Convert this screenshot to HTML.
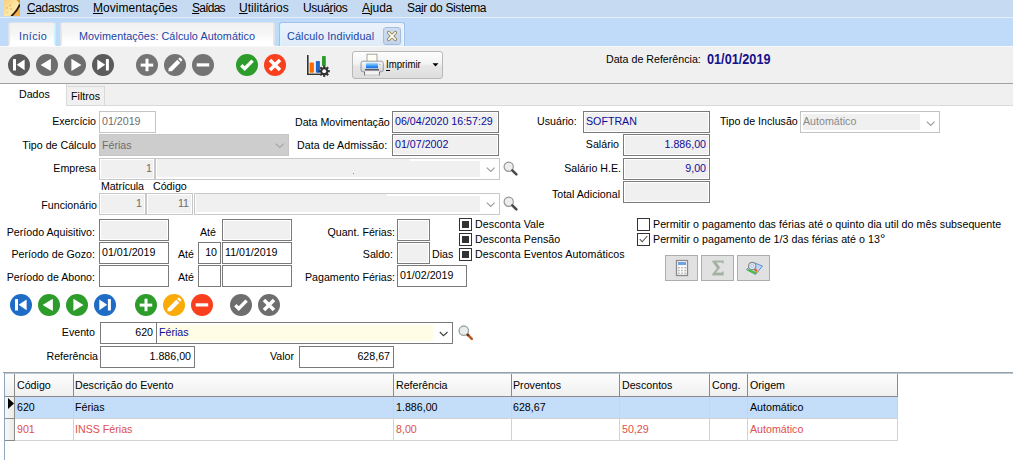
<!DOCTYPE html>
<html><head><meta charset="utf-8">
<style>
*{box-sizing:border-box;margin:0;padding:0}
html,body{width:1013px;height:460px;overflow:hidden;background:#fff;position:relative;font-family:"Liberation Sans",sans-serif}
.a{position:absolute}
.l{position:absolute;font-size:10.67px;line-height:12px;white-space:nowrap;color:#000}
.r{text-align:right}
.m{position:absolute;font-size:12px;line-height:14px;white-space:nowrap;color:#000}
.m u{text-decoration:underline;text-decoration-thickness:1px;text-underline-offset:0.5px}
.bx{position:absolute;border:1px solid #7a7a7a;background:#fff}
.g{background:#f0f0f0}
.nv{color:#1c1ca0}
.gr{color:#6d6d6d}
.circ{position:absolute;width:22px;height:22px;border-radius:50%}
.circ svg{position:absolute;left:0;top:0}
.cb{position:absolute;width:13px;height:13px;border:1px solid #333;background:#fff}
.cb i{position:absolute;left:2px;top:2px;width:7px;height:7px;background:#333}
.cbe{position:absolute;width:13px;height:13px;border:1px solid #333;background:#fff}
.gh{position:absolute;font-size:10.67px;line-height:12px;white-space:nowrap}
</style></head><body>

<!-- MENU BAR -->
<div class="a" style="left:0;top:0;width:1013px;height:17px;background:#c6dbf1"></div>
<div class="a" style="left:0;top:17px;width:1013px;height:1px;background:#e6eef8"></div>
<svg class="a" style="left:4px;top:0" width="16" height="16"><defs><linearGradient id="pg" x1="0" y1="0" x2="1" y2="1"><stop offset="0" stop-color="#f7cf80"/><stop offset="0.55" stop-color="#fde7a4"/><stop offset="1" stop-color="#f9d890"/></linearGradient></defs><rect width="16" height="16" fill="url(#pg)"/><path d="M8.5 16Q13.8 11.5 16 5.5V16Z" fill="#f4b24a"/><path d="M12.5 0H16V5Q15 1.8 12.5 0Z" fill="#d9922e"/><path d="M7.2 16.3Q13.2 11.2 15.9 4.4" stroke="#2c1a06" stroke-width="1.9" fill="none"/><circle cx="6.2" cy="5.3" r="0.9" fill="#eab56a"/><circle cx="2.8" cy="7.8" r="0.9" fill="#eab56a"/><circle cx="7.2" cy="8.8" r="0.9" fill="#eab56a"/><circle cx="3.5" cy="12.5" r="0.8" fill="#f0c27a"/></svg>
<div class="m" style="left:27px;top:1px;letter-spacing:-0.366px"><u>C</u>adastros</div>
<div class="m" style="left:93px;top:1px;letter-spacing:0.044px"><u>M</u>ovimentações</div>
<div class="m" style="left:192px;top:1px;letter-spacing:-0.760px"><u>S</u>aídas</div>
<div class="m" style="left:239px;top:1px;letter-spacing:0.033px"><u>U</u>tilitários</div>
<div class="m" style="left:303px;top:1px;letter-spacing:-0.356px">Usuá<u>r</u>ios</div>
<div class="m" style="left:362px;top:1px;letter-spacing:-0.038px"><u>A</u>juda</div>
<div class="m" style="left:407px;top:1px;letter-spacing:-0.374px">Sa<u>i</u>r do Sistema</div>

<!-- TAB STRIP -->
<div class="a" style="left:0;top:18px;width:1013px;height:28px;background:#c0dbfa"></div>
<div class="a" style="left:8px;top:22px;width:48px;height:25px;background:linear-gradient(#f1f1f1,#f7f7f7 50%,#fff 80%);border:1px solid #dde3ea;border-bottom:none;border-radius:3px 3px 0 0"></div>
<div class="a" style="left:9px;top:25px;width:1px;height:20px;background:#c6f4fc"></div><div class="a" style="left:54px;top:25px;width:1px;height:20px;background:#c6f4fc"></div>
<div class="a" style="left:60px;top:22px;width:215px;height:25px;background:linear-gradient(#f1f1f1,#f7f7f7 50%,#fff 80%);border:1px solid #dde3ea;border-bottom:none;border-radius:3px 3px 0 0"></div>
<div class="a" style="left:61px;top:25px;width:1px;height:20px;background:#c6f4fc"></div><div class="a" style="left:273px;top:25px;width:1px;height:20px;background:#c6f4fc"></div>
<div class="a" style="left:279px;top:22px;width:126px;height:25px;background:linear-gradient(#ebf2fb,#dfebf8);border:1px solid #9fc1ea;border-bottom:none;border-radius:3px 3px 0 0"></div>
<div class="a" style="left:280px;top:25px;width:1px;height:20px;background:#d4f6fd"></div><div class="a" style="left:403px;top:25px;width:1px;height:21px;background:#f4fbff"></div>
<div class="l" style="left:19px;top:30px;font-size:10.8px;color:#2243a6;letter-spacing:0.4px">Início</div>
<div class="l" style="left:79px;top:30px;font-size:10.8px;color:#2243a6;letter-spacing:0.06px">Movimentações: Cálculo Automático</div>
<div class="l" style="left:287px;top:30px;font-size:10.8px;color:#2243a6;letter-spacing:0.15px">Cálculo Individual</div>
<div class="a" style="left:383px;top:27px;width:18px;height:18px;background:linear-gradient(#cddcf0,#c2d4ec);border:1px solid #a6bedc;border-radius:3px"></div>

<!-- TOOLBAR -->
<div class="a" style="left:0;top:46px;width:1013px;height:1px;background:#f9f9f9"></div><div class="a" style="left:0;top:47px;width:1013px;height:36px;background:#f0f0f0"></div>
<div class="a" style="left:0;top:83px;width:1013px;height:1px;background:#a0a0a0"></div>


<!-- toolbar icons -->
<div class="circ" style="left:8px;top:54px;background:#5b5b5b"><svg width="22" height="22"><rect x="5" y="5" width="3" height="11.6" rx="0.5" fill="#fff"/><path d="M8.7 10.8L16.6 5.6V16.2Z" fill="#fff"/></svg></div>
<div class="circ" style="left:36px;top:54px;background:#6e6e6e"><svg width="22" height="22"><path d="M4.6 10.9L14.9 4.8V17.1Z" fill="#fff"/></svg></div>
<div class="circ" style="left:64px;top:54px;background:#6e6e6e"><svg width="22" height="22"><path d="M17.5 10.9L7.4 4.8V17.1Z" fill="#fff"/></svg></div>
<div class="circ" style="left:92px;top:54px;background:#5b5b5b"><svg width="22" height="22"><rect x="13.9" y="5" width="3" height="11.6" rx="0.5" fill="#fff"/><path d="M13.2 10.8L5.3 5.6V16.2Z" fill="#fff"/></svg></div>
<div class="circ" style="left:136px;top:54px;background:#747474"><svg width="22" height="22"><rect x="4.7" y="9.6" width="12.5" height="3" fill="#fff"/><rect x="9.5" y="4.7" width="3" height="12.5" fill="#fff"/></svg></div>
<div class="circ" style="left:164px;top:54px;background:#747474"><svg width="22" height="22"><path d="M4.3 17.3L4.9 14.2L13.3 5.8L16.3 8.8L7.9 17.2Z" fill="#fff"/><path d="M14.2 4.9L15.2 3.9Q15.9 3.3 16.6 4L17.9 5.3Q18.6 6 18 6.7L17.1 7.7Z" fill="#fff"/></svg></div>
<div class="circ" style="left:192px;top:54px;background:#747474"><svg width="22" height="22"><rect x="4.7" y="9.3" width="12.5" height="3.2" fill="#fff"/></svg></div>
<div class="circ" style="left:236px;top:54px;background:#2e9c2a"><svg width="22" height="22"><path d="M5.3 11.3L8.7 14.6L16.6 6.6" stroke="#fff" stroke-width="3.4" fill="none"/></svg></div>
<div class="circ" style="left:264px;top:54px;background:#f8401e"><svg width="22" height="22"><path d="M6 6L16 16M16 6L6 16" stroke="#fff" stroke-width="3.5" fill="none"/></svg></div>
<svg class="a" style="left:302px;top:52px" width="34" height="28">
<rect x="5" y="3" width="1.6" height="20" fill="#333"/><rect x="5" y="21.6" width="13" height="1.4" fill="#333"/>
<rect x="7.6" y="10.6" width="4.3" height="10.2" rx="0.8" fill="#ff6a00"/>
<rect x="13.9" y="9" width="4" height="11.8" rx="0.8" fill="#1f66c8"/>
<rect x="20" y="4" width="3.8" height="10" rx="0.8" fill="#2e9a2e"/>
<g transform="translate(22.2 19.2)"><circle r="3.9" fill="#333"/>
<g fill="#333"><rect x="-1.1" y="-5.6" width="2.2" height="11.2"/><rect x="-5.6" y="-1.1" width="11.2" height="2.2"/><rect x="-1.1" y="-5.6" width="2.2" height="11.2" transform="rotate(45)"/><rect x="-1.1" y="-5.6" width="2.2" height="11.2" transform="rotate(-45)"/></g>
<circle r="1.9" fill="#fff"/></g>
</svg>
<!-- Imprimir -->
<div class="a" style="left:352px;top:51px;width:91px;height:28px;border:1px solid #b8b8b8;border-radius:3px;background:linear-gradient(#fdfdfd 0%,#f3f3f3 45%,#e6e6e6 55%,#dedede 100%)"></div>
<svg class="a" style="left:359px;top:53px" width="26" height="24"><defs><linearGradient id="bd" x1="0" y1="0" x2="0" y2="1"><stop offset="0" stop-color="#fafafc"/><stop offset="1" stop-color="#cfd0d8"/></linearGradient><linearGradient id="bl" x1="0" y1="0" x2="0" y2="1"><stop offset="0" stop-color="#d6ecfc"/><stop offset="0.45" stop-color="#58aef6"/><stop offset="1" stop-color="#0668ee"/></linearGradient></defs>
<rect x="8" y="1.2" width="10" height="9.5" fill="#fffef2" stroke="#9c9c9c" stroke-width="0.9"/>
<path d="M4 8.2H22.3Q24.3 8.2 24.3 10.5V17Q24.3 18.8 22.5 18.8H3.8Q2 18.8 2 17V10.5Q2 8.2 4 8.2Z" fill="url(#bd)" stroke="#8e8e98" stroke-width="0.9"/>
<path d="M7 10Q13 8.6 19 10V15.2H7Z" fill="url(#bl)"/>
<rect x="20.3" y="11" width="1.3" height="1" fill="#7cc8a0"/>
<rect x="6" y="16.2" width="14" height="1.6" fill="#3c3c3c"/>
<rect x="5.8" y="17.8" width="14.4" height="4.2" fill="#f3f3f6" stroke="#b4b4b8" stroke-width="0.6"/>
<rect x="5" y="19" width="1" height="3.4" fill="#777"/><rect x="20" y="19" width="1" height="3.4" fill="#777"/>
</svg>
<div class="a" style="left:386px;top:58px;font-size:11.6px;line-height:12px;color:#000;transform:scaleX(0.83);transform-origin:0 0;white-space:nowrap">Imprimir</div>
<div class="a" style="left:386px;top:70px;width:4px;height:1px;background:#000"></div>
<svg class="a" style="left:432px;top:63px" width="7" height="4"><path d="M0.5 0.3H6.5L3.5 3.5Z" fill="#000"/></svg>
<!-- tab close x -->
<svg class="a" style="left:383px;top:27px" width="18" height="18"><path d="M5.6 5.6L12.4 12.4M12.4 5.6L5.6 12.4" stroke="#8c7c44" stroke-width="3.3" stroke-linecap="round"/><path d="M5.6 5.6L12.4 12.4M12.4 5.6L5.6 12.4" stroke="#fffef4" stroke-width="1.6" stroke-linecap="round"/></svg>
<div class="l" style="left:606px;top:53px">Data de Referência:</div>
<div class="a" style="left:707px;top:53px;font-weight:bold;font-size:12.67px;line-height:14px;color:#16108a;transform:scaleY(1.12);transform-origin:0 11px;white-space:nowrap;letter-spacing:0.02px">01/01/2019</div>

<!-- Dados / Filtros -->
<div class="a" style="left:66px;top:84px;width:947px;height:21px;background:#f0f0f0"></div>
<div class="a" style="left:66px;top:86px;width:39px;height:20px;border:1px solid #d9d9d9;border-bottom:none;background:#f0f0f0"></div>
<div class="a" style="left:66px;top:105px;width:947px;height:1px;background:#dadada"></div>
<div class="a" style="left:66px;top:84px;width:1px;height:22px;background:#d9d9d9"></div>
<div class="l" style="left:19px;top:88px">Dados</div>
<div class="l" style="left:71px;top:90px">Filtros</div>

<!-- FORM -->
<div class="l r" style="left:-104px;width:200px;top:115px;">Exercício</div>
<div class="a" style="left:99px;top:111px;width:57px;height:22px;border:1px solid #c5c5c5;background:#fff;"></div>
<div class="l" style="left:102px;top:115px;color:#6d6d6d">01/2019</div>
<div class="l" style="left:295px;top:116px;">Data Movimentação</div>
<div class="a" style="left:392px;top:111px;width:107px;height:22px;border:1px solid #7a7a7a;background:#f0f0f0;box-shadow:inset 0 0 0 1px #fff;"></div>
<div class="l" style="left:395px;top:115px;color:#0c0c98">06/04/2020 16:57:29</div>
<div class="l" style="left:537px;top:115px;">Usuário:</div>
<div class="a" style="left:583px;top:111px;width:127px;height:22px;border:1px solid #7a7a7a;background:#f0f0f0;box-shadow:inset 0 0 0 1px #fff;"></div>
<div class="l" style="left:586px;top:115px;color:#0c0c98">SOFTRAN</div>
<div class="l" style="left:720px;top:115px;">Tipo de Inclusão</div>
<div class="a" style="left:800px;top:111px;width:140px;height:22px;border:1px solid #c3c3c3;background:#fff;"></div>
<div class="a" style="left:803px;top:114px;width:117px;height:16px;background:#f0f0f0"></div>
<div class="l" style="left:803px;top:115px;color:#8a8a8a">Automático</div>
<svg class="a" style="left:926px;top:121px" width="10" height="6"><path d="M0.8 0.7L4.7 4.5L8.6 0.7" stroke="#9a9a9a" stroke-width="1.1" fill="none"/></svg>
<div class="l r" style="left:-104px;width:200px;top:139px;">Tipo de Cálculo</div>
<div class="a" style="left:99px;top:134px;width:190px;height:22px;background:#cdcdcd;border:1px solid #c6c6c6"></div>
<div class="l" style="left:102px;top:139px;color:#6d6d6d">Férias</div>
<svg class="a" style="left:275px;top:143px" width="10" height="6"><path d="M0.8 0.7L4.7 4.5L8.6 0.7" stroke="#a8a8a8" stroke-width="1.2" fill="none"/></svg>
<div class="l" style="left:297px;top:139px;letter-spacing:0.05px">Data de Admissão:</div>
<div class="a" style="left:392px;top:134px;width:107px;height:22px;border:1px solid #7a7a7a;background:#f0f0f0;box-shadow:inset 0 0 0 1px #fff;"></div>
<div class="l" style="left:395px;top:138px;color:#0c0c98">01/07/2002</div>
<div class="l r" style="left:419px;width:200px;top:138px;">Salário</div>
<div class="a" style="left:623px;top:134px;width:87px;height:22px;border:1px solid #7a7a7a;background:#f0f0f0;box-shadow:inset 0 0 0 1px #fff;"></div>
<div class="l r" style="left:623px;width:83px;top:138px;color:#0c0c98">1.886,00</div>
<div class="l r" style="left:-104px;width:200px;top:162px;">Empresa</div>
<div class="a" style="left:99px;top:158px;width:56px;height:22px;border:1px solid #c8c8c8;background:#f0f0f0;box-shadow:inset 0 0 0 1px #fff;"></div>
<div class="l r" style="left:99px;width:53px;top:162px;color:#6d6d6d">1</div>
<div class="a" style="left:155px;top:158px;width:345px;height:22px;border:1px solid #c8c8c8;background:#fff;"></div>
<div class="a" style="left:157px;top:159px;width:253px;height:18px;background:#f0f0f0"></div><div class="a" style="left:410px;top:161px;width:70px;height:16px;background:#f0f0f0"></div>
<div class="a" style="left:353px;top:173px;width:1px;height:1px;background:#8080c0"></div>
<svg class="a" style="left:486px;top:167px" width="10" height="6"><path d="M0.8 0.7L4.7 4.5L8.6 0.7" stroke="#9a9a9a" stroke-width="1.1" fill="none"/></svg>
<svg class="a" style="left:503px;top:161px" width="16" height="16"><circle cx="5.7" cy="5.7" r="4.6" fill="#ededed" stroke="#959595" stroke-width="1.2"/><path d="M9.3 9.3L13.4 13.4" stroke="#4a4a4a" stroke-width="2.6" stroke-linecap="round"/></svg>
<div class="l r" style="left:421px;width:200px;top:162px;">Salário H.E.</div>
<div class="a" style="left:623px;top:158px;width:87px;height:22px;border:1px solid #7a7a7a;background:#f0f0f0;box-shadow:inset 0 0 0 1px #fff;"></div>
<div class="l r" style="left:623px;width:83px;top:162px;color:#0c0c98">9,00</div>
<div class="l" style="left:101px;top:180px;letter-spacing:-0.1px">Matrícula</div>
<div class="l" style="left:153px;top:180px;">Código</div>
<div class="l r" style="left:420px;width:200px;top:188px;">Total Adicional</div>
<div class="a" style="left:623px;top:181px;width:87px;height:22px;border:1px solid #7a7a7a;background:#f0f0f0;box-shadow:inset 0 0 0 1px #fff;"></div>
<div class="l r" style="left:-103px;width:200px;top:199px;">Funcionário</div>
<div class="a" style="left:99px;top:193px;width:47px;height:22px;border:1px solid #c8c8c8;background:#f0f0f0;box-shadow:inset 0 0 0 1px #fff;"></div>
<div class="l r" style="left:99px;width:43px;top:197px;color:#6d6d6d">1</div>
<div class="a" style="left:146px;top:193px;width:47px;height:22px;border:1px solid #c8c8c8;background:#f0f0f0;box-shadow:inset 0 0 0 1px #fff;"></div>
<div class="l r" style="left:146px;width:43px;top:197px;color:#6d6d6d">11</div>
<div class="a" style="left:194px;top:193px;width:306px;height:22px;border:1px solid #c8c8c8;background:#fff;"></div>
<div class="a" style="left:196px;top:194px;width:191px;height:18px;background:#f0f0f0"></div><div class="a" style="left:387px;top:196px;width:93px;height:16px;background:#f0f0f0"></div>
<svg class="a" style="left:486px;top:202px" width="10" height="6"><path d="M0.8 0.7L4.7 4.5L8.6 0.7" stroke="#9a9a9a" stroke-width="1.1" fill="none"/></svg>
<svg class="a" style="left:503px;top:196px" width="16" height="16"><circle cx="5.7" cy="5.7" r="4.6" fill="#ededed" stroke="#959595" stroke-width="1.2"/><path d="M9.3 9.3L13.4 13.4" stroke="#4a4a4a" stroke-width="2.6" stroke-linecap="round"/></svg>
<div class="l r" style="left:-105px;width:200px;top:226px;">Período Aquisitivo:</div>
<div class="a" style="left:99px;top:219px;width:70px;height:22px;border:1px solid #7a7a7a;background:#f0f0f0;box-shadow:inset 0 0 0 1px #fff;"></div>
<div class="l" style="left:200px;top:226px;">Até</div>
<div class="a" style="left:222px;top:219px;width:70px;height:22px;border:1px solid #7a7a7a;background:#f0f0f0;box-shadow:inset 0 0 0 1px #fff;"></div>
<div class="l r" style="left:-105px;width:200px;top:248px;">Período de Gozo:</div>
<div class="a" style="left:99px;top:242px;width:70px;height:22px;border:1px solid #7a7a7a;background:#fff;box-shadow:inset 0 0 0 1px #fff;"></div>
<div class="l" style="left:102px;top:246px;">01/01/2019</div>
<div class="l" style="left:178px;top:248px;">Até</div>
<div class="a" style="left:198px;top:242px;width:23px;height:22px;border:1px solid #7a7a7a;background:#fff;box-shadow:inset 0 0 0 1px #fff;"></div>
<div class="l r" style="left:198px;width:19px;top:246px">10</div>
<div class="a" style="left:222px;top:242px;width:70px;height:22px;border:1px solid #7a7a7a;background:#fff;box-shadow:inset 0 0 0 1px #fff;"></div>
<div class="l" style="left:225px;top:246px;">11/01/2019</div>
<div class="l r" style="left:-105px;width:200px;top:271px;">Período de Abono:</div>
<div class="a" style="left:99px;top:265px;width:70px;height:22px;border:1px solid #7a7a7a;background:#fff;box-shadow:inset 0 0 0 1px #fff;"></div>
<div class="l" style="left:178px;top:271px;">Até</div>
<div class="a" style="left:198px;top:265px;width:23px;height:22px;border:1px solid #7a7a7a;background:#fff;box-shadow:inset 0 0 0 1px #fff;"></div>
<div class="a" style="left:222px;top:265px;width:70px;height:22px;border:1px solid #7a7a7a;background:#fff;box-shadow:inset 0 0 0 1px #fff;"></div>
<div class="l r" style="left:195px;width:200px;top:226px;">Quant. Férias:</div>
<div class="a" style="left:397px;top:219px;width:33px;height:22px;border:1px solid #7a7a7a;background:#f0f0f0;box-shadow:inset 0 0 0 1px #fff;"></div>
<div class="l r" style="left:193px;width:200px;top:248px;">Saldo:</div>
<div class="a" style="left:397px;top:242px;width:33px;height:22px;border:1px solid #7a7a7a;background:#f0f0f0;box-shadow:inset 0 0 0 1px #fff;"></div>
<div class="l" style="left:432px;top:248px;">Dias</div>
<div class="l r" style="left:195px;width:200px;top:271px;">Pagamento Férias:</div>
<div class="a" style="left:397px;top:265px;width:70px;height:22px;border:1px solid #7a7a7a;background:#fff;box-shadow:inset 0 0 0 1px #fff;"></div>
<div class="l" style="left:400px;top:269px;">01/02/2019</div>
<div class="cb" style="left:459px;top:218px"><i></i></div>
<div class="l" style="left:475px;top:218px;letter-spacing:0.08px">Desconta Vale</div>
<div class="cb" style="left:459px;top:233px"><i></i></div>
<div class="l" style="left:475px;top:233px;letter-spacing:0.08px">Desconta Pensão</div>
<div class="cb" style="left:459px;top:248px"><i></i></div>
<div class="l" style="left:475px;top:248px;letter-spacing:0.08px">Desconta Eventos Automáticos</div>
<div class="cbe" style="left:637px;top:218px"></div>
<div class="l" style="left:653px;top:218px;letter-spacing:0.04px">Permitir o pagamento das férias até o quinto dia util do mês subsequente</div>
<div class="cbe" style="left:637px;top:233px"><svg style="position:absolute;left:0;top:0" width="11" height="11"><path d="M1.8 5.2L4.2 7.8L9.3 2" stroke="#505050" stroke-width="1.1" fill="none"/></svg></div>
<div class="l" style="left:653px;top:233px;letter-spacing:0.04px">Permitir o pagamento de 1/3 das férias até o 13<span style="font-size:13.5px;line-height:10px">°</span></div>
<div class="a" style="left:665px;top:255px;width:33px;height:26px;background:#e1e1e1;border:1px solid #adadad"></div>
<div class="a" style="left:701px;top:255px;width:33px;height:26px;background:#e1e1e1;border:1px solid #adadad"></div>
<div class="a" style="left:737px;top:255px;width:33px;height:26px;background:#e1e1e1;border:1px solid #adadad"></div>
<!-- NAV2 -->
<div class="circ" style="left:10px;top:294px;background:#1e6cc6"><svg width="22" height="22"><rect x="5" y="5" width="3" height="11.6" rx="0.5" fill="#fff"/><path d="M8.7 10.8L16.6 5.6V16.2Z" fill="#fff"/></svg></div>
<div class="circ" style="left:38px;top:294px;background:#2e9c2a"><svg width="22" height="22"><path d="M4.6 10.9L14.9 4.8V17.1Z" fill="#fff"/></svg></div>
<div class="circ" style="left:66px;top:294px;background:#2e9c2a"><svg width="22" height="22"><path d="M17.5 10.9L7.4 4.8V17.1Z" fill="#fff"/></svg></div>
<div class="circ" style="left:94px;top:294px;background:#1e6cc6"><svg width="22" height="22"><rect x="13.9" y="5" width="3" height="11.6" rx="0.5" fill="#fff"/><path d="M13.2 10.8L5.3 5.6V16.2Z" fill="#fff"/></svg></div>
<div class="circ" style="left:135px;top:294px;background:#2e9c2a"><svg width="22" height="22"><rect x="4.7" y="9.6" width="12.5" height="3" fill="#fff"/><rect x="9.5" y="4.7" width="3" height="12.5" fill="#fff"/></svg></div>
<div class="circ" style="left:163px;top:294px;background:#fbab08"><svg width="22" height="22"><path d="M4.3 17.3L4.9 14.2L13.3 5.8L16.3 8.8L7.9 17.2Z" fill="#fff"/><path d="M14.2 4.9L15.2 3.9Q15.9 3.3 16.6 4L17.9 5.3Q18.6 6 18 6.7L17.1 7.7Z" fill="#fff"/></svg></div>
<div class="circ" style="left:191px;top:294px;background:#f8401e"><svg width="22" height="22"><rect x="4.7" y="9.3" width="12.5" height="3.2" fill="#fff"/></svg></div>
<div class="circ" style="left:230px;top:294px;background:#6e6e6e"><svg width="22" height="22"><path d="M5.3 11.3L8.7 14.6L16.6 6.6" stroke="#fff" stroke-width="3.4" fill="none"/></svg></div>
<div class="circ" style="left:258px;top:294px;background:#6e6e6e"><svg width="22" height="22"><path d="M6 6L16 16M16 6L6 16" stroke="#fff" stroke-width="3.5" fill="none"/></svg></div>
<div class="l r" style="left:-105px;width:200px;top:326px;">Evento</div>
<div class="a" style="left:100px;top:322px;width:57px;height:22px;border:1px solid #7a7a7a;background:#fff;box-shadow:inset 0 0 0 1px #fff;"></div>
<div class="l r" style="left:100px;width:53px;top:326px">620</div>
<div class="a" style="left:156px;top:322px;width:297px;height:22px;border:1px solid #7a7a7a;background:#fff;box-shadow:inset 0 0 0 1px #fff;"></div>
<div class="a" style="left:159px;top:325px;width:274px;height:16px;background:#fffde6"></div>
<div class="l" style="left:159px;top:326px;color:#0c0c98">Férias</div>
<svg class="a" style="left:439px;top:331px" width="10" height="6"><path d="M0.8 1L4.5 4.6L8.5 1" stroke="#444" stroke-width="1.25" fill="none"/></svg>
<svg class="a" style="left:458px;top:325px" width="16" height="16"><circle cx="5.8" cy="5.7" r="4.7" fill="#e9edee" stroke="#95a4a4" stroke-width="1.3"/><path d="M9.6 9.6L13.8 13.8" stroke="#b35c22" stroke-width="2.6" stroke-linecap="round"/><path d="M9.4 9.4L10.6 10.6" stroke="#5a3010" stroke-width="2.6"/></svg>
<div class="l r" style="left:-102px;width:200px;top:350px;">Referência</div>
<div class="a" style="left:100px;top:346px;width:95px;height:22px;border:1px solid #7a7a7a;background:#fff;box-shadow:inset 0 0 0 1px #fff;"></div>
<div class="l r" style="left:100px;width:91px;top:350px">1.886,00</div>
<div class="l" style="left:270px;top:350px;">Valor</div>
<div class="a" style="left:299px;top:346px;width:95px;height:22px;border:1px solid #7a7a7a;background:#fff;box-shadow:inset 0 0 0 1px #fff;"></div>
<div class="l r" style="left:299px;width:91px;top:350px">628,67</div>
<div class="a" style="left:3px;top:372px;width:1010px;height:1px;background:#a0a0a0"></div>
<div class="a" style="left:4px;top:373px;width:1009px;height:1px;background:#b4c8dc"></div>
<div class="a" style="left:4px;top:373px;width:1px;height:87px;background:#8ea6be"></div>
<div class="a" style="left:5px;top:374px;width:892px;height:22px;background:linear-gradient(#fdfdfd,#f0f0f0)"></div>
<div class="a" style="left:5px;top:396px;width:893px;height:1px;background:#8a8a8a"></div>
<div class="a" style="left:15px;top:397px;width:882px;height:21px;background:#c4ddf8"></div>
<div class="a" style="left:15px;top:418px;width:882px;height:1px;background:#d2d2d2"></div>
<div class="a" style="left:15px;top:440px;width:882px;height:1px;background:#d2d2d2"></div>
<div class="a" style="left:5px;top:397px;width:9px;height:43px;background:linear-gradient(90deg,#f7f7f7,#ececec)"></div>
<div class="a" style="left:5px;top:418px;width:10px;height:1px;background:#8a8a8a"></div>
<div class="a" style="left:5px;top:440px;width:10px;height:1px;background:#8a8a8a"></div>
<div class="a" style="left:14px;top:374px;width:1px;height:67px;background:#8a8a8a"></div>
<div class="a" style="left:73px;top:374px;width:1px;height:22px;background:#8a8a8a"></div>
<div class="a" style="left:73px;top:397px;width:1px;height:44px;background:#d2d2d2"></div>
<div class="a" style="left:393px;top:374px;width:1px;height:22px;background:#8a8a8a"></div>
<div class="a" style="left:393px;top:397px;width:1px;height:44px;background:#d2d2d2"></div>
<div class="a" style="left:511px;top:374px;width:1px;height:22px;background:#8a8a8a"></div>
<div class="a" style="left:511px;top:397px;width:1px;height:44px;background:#d2d2d2"></div>
<div class="a" style="left:619px;top:374px;width:1px;height:22px;background:#8a8a8a"></div>
<div class="a" style="left:619px;top:397px;width:1px;height:44px;background:#d2d2d2"></div>
<div class="a" style="left:709px;top:374px;width:1px;height:22px;background:#8a8a8a"></div>
<div class="a" style="left:709px;top:397px;width:1px;height:44px;background:#d2d2d2"></div>
<div class="a" style="left:747px;top:374px;width:1px;height:22px;background:#8a8a8a"></div>
<div class="a" style="left:747px;top:397px;width:1px;height:44px;background:#d2d2d2"></div>
<div class="a" style="left:897px;top:374px;width:1px;height:22px;background:#8a8a8a"></div>
<div class="a" style="left:897px;top:397px;width:1px;height:44px;background:#d2d2d2"></div>
<svg class="a" style="left:7px;top:398px" width="8" height="12"><path d="M1 0V11L7 5.5Z" fill="#000"/></svg>
<div class="gh" style="left:17px;top:379px;color:#000">Código</div>
<div class="gh" style="left:75px;top:379px;color:#000">Descrição do Evento</div>
<div class="gh" style="left:396px;top:379px;color:#000">Referência</div>
<div class="gh" style="left:513px;top:379px;color:#000">Proventos</div>
<div class="gh" style="left:622px;top:379px;color:#000">Descontos</div>
<div class="gh" style="left:712px;top:379px;color:#000">Cong.</div>
<div class="gh" style="left:750px;top:379px;color:#000">Origem</div>
<div class="gh" style="left:17px;top:401px;color:#000">620</div>
<div class="gh" style="left:75px;top:401px;color:#000">Férias</div>
<div class="gh" style="left:396px;top:401px;color:#000">1.886,00</div>
<div class="gh" style="left:513px;top:401px;color:#000">628,67</div>
<div class="gh" style="left:750px;top:401px;color:#000">Automático</div>
<div class="gh" style="left:17px;top:423px;color:#e0504a">901</div>
<div class="gh" style="left:75px;top:423px;color:#e0504a">INSS Férias</div>
<div class="gh" style="left:396px;top:423px;color:#e0504a">8,00</div>
<div class="gh" style="left:622px;top:423px;color:#e0504a">50,29</div>
<div class="gh" style="left:750px;top:423px;color:#e0504a">Automático</div>
<svg class="a" style="left:675px;top:259px" width="14" height="18"><rect x="1.5" y="1.5" width="11" height="15" fill="#fafafa" stroke="#8a8a8a" stroke-width="1.3"/><rect x="3" y="3" width="8" height="3" fill="#6fa2e2"/><g fill="#b0b0b0"><rect x="3" y="8" width="1.6" height="1.4"/><rect x="6.2" y="8" width="1.6" height="1.4"/><rect x="9.4" y="8" width="1.6" height="1.4"/><rect x="3" y="10.8" width="1.6" height="1.4"/><rect x="6.2" y="10.8" width="1.6" height="1.4"/><rect x="9.4" y="10.8" width="1.6" height="1.4"/><rect x="3" y="13.6" width="1.6" height="1.4"/><rect x="6.2" y="13.6" width="1.6" height="1.4"/><rect x="9.4" y="13.6" width="1.6" height="1.4"/></g></svg>
<svg class="a" style="left:711px;top:259px" width="14" height="18"><path d="M1.5 1.8H12.5V4.2H11.5L10.8 3.3H5.3L9 8.6L4.8 13.8H11L11.8 12.6H12.6V16.2H1.3V15.2L6.2 9.2L1.5 2.8Z" fill="#a9a9a9" stroke="#9ccf9c" stroke-width="0.4"/></svg>
<svg class="a" style="left:744px;top:259px" width="20" height="18"><path d="M2.5 10.5L9.5 3.5L18.5 7L11.5 15.5Z" fill="#bcd6f4" stroke="#4a78d0" stroke-width="0.8"/><path d="M3 11.6L11.6 15.2L12.8 13.6L4.6 10Z" fill="#3cc436"/><circle cx="8.2" cy="7" r="3.7" fill="#dfeaf6" stroke="#8c8c8c" stroke-width="1.2"/><circle cx="8.2" cy="7" r="1.5" fill="none" stroke="#a8c0d8" stroke-width="0.8"/><path d="M10.8 10L13.6 13.4" stroke="#e2561e" stroke-width="2"/><path d="M12.6 12.2L14 13.8" stroke="#f0c030" stroke-width="1.4"/></svg>
</body></html>
